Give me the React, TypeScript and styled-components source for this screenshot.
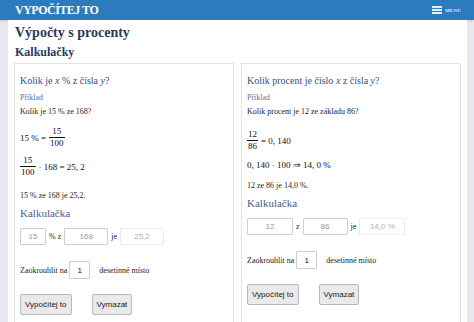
import React from "react";
import styled, { createGlobalStyle } from "styled-components";

const serif = `"Liberation Serif", "Times New Roman", serif`;
const sans = `"Liberation Sans", Arial, sans-serif`;

const GlobalStyle = createGlobalStyle`
  html, body {
    margin: 0;
    padding: 0;
    background: #e8e9ee;
  }
  * {
    box-sizing: border-box;
  }
`;

const App = () => {
  return (
    <>
      <GlobalStyle />
      <Page>
        <Header>
          <Logo>VYPOČÍTEJ TO</Logo>
          <MenuButton>
            <Burger>
              <span />
              <span />
              <span />
            </Burger>
            <MenuLabel>MENU</MenuLabel>
          </MenuButton>
        </Header>

        <Main>
          <Title>Výpočty s procenty</Title>
          <Subtitle>Kalkulačky</Subtitle>

          <Cards>
            <Card>
              <CardTitle>
                Kolik je <i>x</i> % z čísla <i>y</i>?
              </CardTitle>
              <ExampleLabel>Příklad</ExampleLabel>
              <Text $mt={2}>Kolik je 15 % ze 168?</Text>

              <MathLine $mt={9}>
                <span>15 % =</span>
                <Frac>
                  <Num>15</Num>
                  <Den>100</Den>
                </Frac>
              </MathLine>
              <MathLine $mt={8}>
                <Frac>
                  <Num>15</Num>
                  <Den>100</Den>
                </Frac>
                <span>· 168 = 25, 2</span>
              </MathLine>

              <Text $mt={13}>15 % ze 168 je 25,2.</Text>

              <CalcTitle>Kalkulačka</CalcTitle>
              <InputRow>
                <Field $w={26} defaultValue="15" />
                <Joint>% z</Joint>
                <Field $w={44} defaultValue="168" />
                <Joint>je</Joint>
                <Field $w={44} $result readOnly defaultValue="25,2" />
              </InputRow>

              <RoundRow>
                <span>Zaokrouhlit na</span>
                <RoundField defaultValue="1" />
                <span>desetinné místo</span>
              </RoundRow>

              <ButtonRow>
                <Button>Vypočítej to</Button>
                <Button>Vymazat</Button>
              </ButtonRow>
            </Card>

            <Card>
              <CardTitle>
                Kolik procent je číslo <i>x</i> z čísla <i>y</i>?
              </CardTitle>
              <ExampleLabel>Příklad</ExampleLabel>
              <Text $mt={2}>Kolik procent je 12 ze základu 86?</Text>

              <MathLine $mt={12}>
                <Frac>
                  <Num>12</Num>
                  <Den>86</Den>
                </Frac>
                <span>= 0, 140</span>
              </MathLine>
              <MathLine $mt={8}>
                <span>0, 140 · 100 ⇒ 14, 0 %</span>
              </MathLine>

              <Text $mt={9}>12 ze 86 je 14,0 %.</Text>

              <CalcTitle>Kalkulačka</CalcTitle>
              <InputRow>
                <Field $w={46} defaultValue="12" />
                <Joint>z</Joint>
                <Field $w={45} defaultValue="86" />
                <Joint>je</Joint>
                <Field $w={46} $result readOnly defaultValue="14,0 %" />
              </InputRow>

              <RoundRow>
                <span>Zaokrouhlit na</span>
                <RoundField defaultValue="1" />
                <span>desetinné místo</span>
              </RoundRow>

              <ButtonRow>
                <Button>Vypočítej to</Button>
                <Button>Vymazat</Button>
              </ButtonRow>
            </Card>
          </Cards>
        </Main>
      </Page>
    </>
  );
};

const Page = styled.div`
  min-height: 100vh;
  background: #e8e9ee;
  font-family: ${serif};
`;

const Header = styled.header`
  display: flex;
  align-items: center;
  justify-content: space-between;
  height: 20px;
  padding: 0 13px 0 15px;
  background: #2b7bbd;
  box-shadow: 0 1px 2px rgba(0, 0, 0, 0.15);
`;

const Logo = styled.div`
  font-family: ${serif};
  font-size: 12px;
  font-weight: bold;
  letter-spacing: -0.5px;
  color: #fff;
  line-height: 1;
`;

const MenuButton = styled.div`
  display: flex;
  align-items: center;
  gap: 3px;
`;

const Burger = styled.div`
  display: flex;
  flex-direction: column;
  justify-content: space-between;
  width: 10px;
  height: 8px;

  span {
    display: block;
    height: 2px;
    background: #e6eff8;
  }
`;

const MenuLabel = styled.span`
  font-family: ${serif};
  font-size: 5px;
  font-weight: bold;
  color: #dce9f6;
  letter-spacing: 0.2px;
`;

const Main = styled.main`
  min-height: calc(100vh - 20px);
  margin: 0 7px 0 8px;
  padding: 0 6px;
  background: #fff;
  overflow: hidden;
`;

const Title = styled.h1`
  margin: 4px 0 0 1px;
  font-size: 14px;
  line-height: 18px;
  font-weight: bold;
  color: #283b5f;
`;

const Subtitle = styled.h2`
  margin: 2px 0 0 1px;
  font-size: 12px;
  line-height: 16px;
  font-weight: bold;
  color: #283b5f;
`;

const Cards = styled.div`
  display: grid;
  grid-template-columns: 1fr 1fr;
  gap: 7px;
  margin-top: 3px;
`;

const Card = styled.section`
  padding: 0 5px 20px;
  border: 1px solid #e4e4e6;
`;

const CardTitle = styled.h3`
  margin: 10px 0 0;
  font-size: 10px;
  line-height: 14px;
  font-weight: normal;
  color: #33507f;

  i {
    font-style: italic;
  }
`;

const ExampleLabel = styled.div`
  margin-top: 4px;
  font-size: 8px;
  line-height: 12px;
  color: #5f6f97;
`;

const Text = styled.p<{ $mt: number }>`
  margin: ${p => p.$mt}px 0 0;
  font-size: 8px;
  line-height: 12px;
  color: #1e1e1e;
`;

const MathLine = styled.div<{ $mt: number }>`
  display: flex;
  align-items: center;
  gap: 3px;
  min-height: 12px;
  margin-top: ${p => p.$mt}px;
  font-size: 9px;
  line-height: 12px;
  color: #111;
  white-space: pre;
`;

const Frac = styled.span`
  display: inline-flex;
  flex-direction: column;
  align-items: stretch;
  text-align: center;
  line-height: 9px;
`;

const Num = styled.span`
  padding: 0 1px 1px;
`;

const Den = styled.span`
  padding: 1px 1px 0;
  border-top: 1px solid #111;
`;

const CalcTitle = styled.h4`
  margin: 4px 0 0;
  font-size: 11px;
  line-height: 14px;
  font-weight: normal;
  color: #48608f;
`;

const InputRow = styled.div`
  display: flex;
  align-items: center;
  gap: 2px;
  margin-top: 8px;
  font-size: 8px;
  color: #222;
`;

const Joint = styled.span`
  padding: 0 1px;
`;

const Field = styled.input<{ $w: number; $result?: boolean }>`
  width: ${p => p.$w}px;
  height: 17px;
  padding: 0;
  border: 1px solid ${p => (p.$result ? "#ececec" : "#cfcfcf")};
  border-radius: 1px;
  font-family: ${sans};
  font-size: 8px;
  text-align: center;
  color: ${p => (p.$result ? "#b0b0b0" : "#9a9a9a")};
  background: #fff;
  outline: none;
`;

const RoundRow = styled.div`
  display: flex;
  align-items: center;
  gap: 2px;
  margin-top: 16px;
  font-size: 8px;
  color: #222;
`;

const RoundField = styled.input`
  width: 21px;
  height: 18px;
  margin-right: 7px;
  padding: 0;
  border: 1px solid #cfcfcf;
  border-radius: 1px;
  font-family: ${sans};
  font-size: 8px;
  text-align: center;
  color: #111;
  outline: none;
`;

const ButtonRow = styled.div`
  display: flex;
  gap: 20px;
  margin-top: 15px;
`;

const Button = styled.button`
  height: 21px;
  padding: 0 4px;
  border: 1px solid #b8b8b8;
  border-radius: 2px;
  background: #e9e9e9;
  font-family: ${sans};
  font-size: 8px;
  color: #222;
  cursor: pointer;
`;

export default App;
